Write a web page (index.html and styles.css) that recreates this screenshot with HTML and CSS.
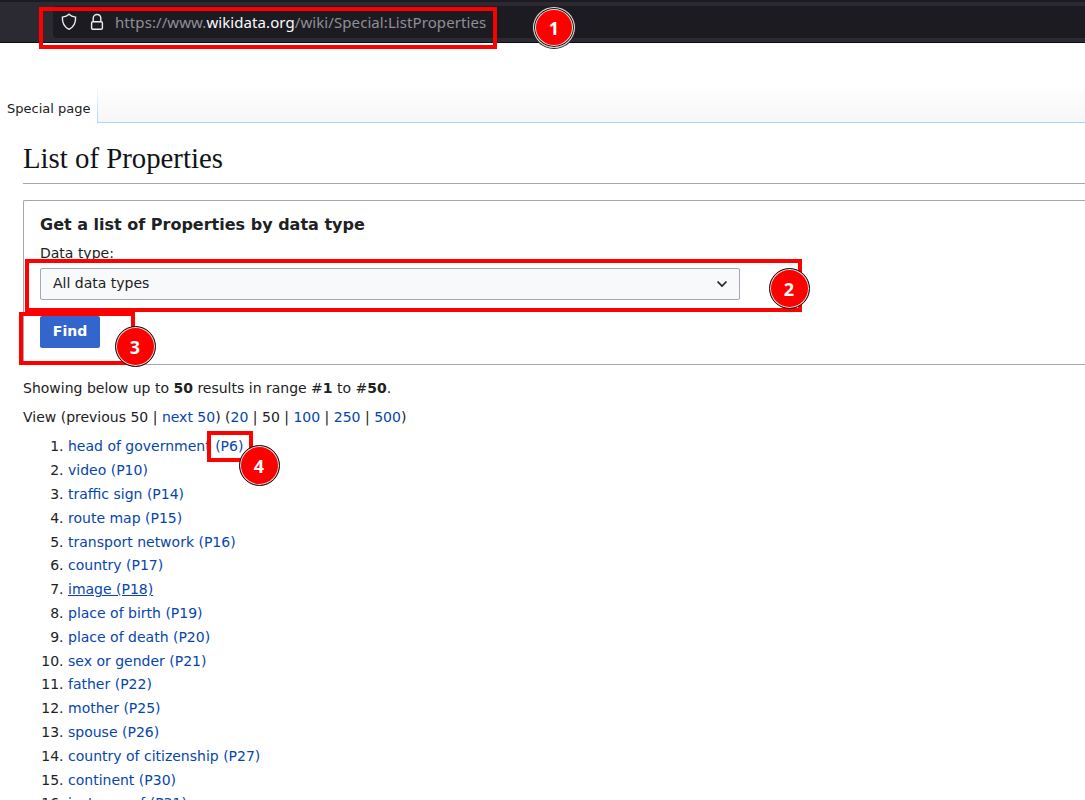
FILE: index.html
```html
<!DOCTYPE html>
<html lang="en">
<head>
<meta charset="utf-8">
<title>List of Properties</title>
<link rel="stylesheet" href="styles.css">
</head>
<body>
<header class="browser">
  <div class="address">
    <svg class="shield" width="16" height="18" viewBox="0 0 16 18"><path d="M8 1.200C9.400 2.600 11.500 3.600 14.600 4.100C14.900 9.300 12.700 13.900 8 16.300C3.300 13.900 1.100 9.300 1.400 4.100C4.500 3.600 6.600 2.600 8 1.200Z"/></svg>
    <svg class="lock" width="14" height="18" viewBox="0 0 14 18"><rect x="1.600" y="8.700" width="10.800" height="7.600" rx="1.300"/><path d="M3.200 8.700V5.500C3.200 .2 10.800 .2 10.800 5.500V8.700"/></svg>
    <span class="url">https://www.<span class="host">wikidata.org</span>/wiki/Special:ListProperties</span>
  </div>
</header>
<nav class="tabs"><div class="tab">Special page</div><div class="tabfill"></div></nav>
<main class="content">
  <h1 class="title">List of Properties</h1>
  <form class="panel">
    <h2 class="legend">Get a list of Properties by data type</h2>
    <label class="label">Data type:</label>
    <div class="select"><span>All data types</span><svg width="12" height="8" viewBox="0 0 12 8"><path d="M1.500 1.500L6 6L10.500 1.500"/></svg></div>
    <button class="find" type="button">Find</button>
  </form>
  <p class="line">Showing below up to <b>50</b> results in range #<b>1</b> to #<b>50</b>.</p>
  <p class="line">View (previous 50 | <a>next 50</a>) (<a>20</a> | 50 | <a>100</a> | <a>250</a> | <a>500</a>)</p>
  <ol class="list">
    <li><a>head of government (P6)</a></li>
    <li><a>video (P10)</a></li>
    <li><a>traffic sign (P14)</a></li>
    <li><a>route map (P15)</a></li>
    <li><a>transport network (P16)</a></li>
    <li><a>country (P17)</a></li>
    <li><a class="hovered">image (P18)</a></li>
    <li><a>place of birth (P19)</a></li>
    <li><a>place of death (P20)</a></li>
    <li><a>sex or gender (P21)</a></li>
    <li><a>father (P22)</a></li>
    <li><a>mother (P25)</a></li>
    <li><a>spouse (P26)</a></li>
    <li><a>country of citizenship (P27)</a></li>
    <li><a>continent (P30)</a></li>
    <li><a>instance of (P31)</a></li>
  </ol>
</main>
<div class="frame frame-url"></div>
<div class="frame frame-select"></div>
<div class="frame frame-find"></div>
<div class="frame frame-id"></div>
<div class="badge badge-1">1</div>
<div class="badge badge-2">2</div>
<div class="badge badge-3">3</div>
<div class="badge badge-4">4</div>
</body>
</html>
```
FILE: styles.css
```css
* { box-sizing: border-box; }
body {
  margin: 0;
  height: 800px;
  position: relative;
  overflow: hidden;
  background: #fff;
  color: #202122;
  font: 14px/22.4px "DejaVu Sans", sans-serif;
}
svg { fill: none; flex: none; }
.browser {
  height: 43px;
  padding: 4px 0 4px 53px;
  background: #2b2a33;
  border-top: 2px solid #1c1b22;
  border-bottom: 1px solid #0c0c0d;
}
.address {
  height: 32px;
  display: flex;
  align-items: center;
  padding-left: 8px;
  background: #1c1b22;
  border-radius: 4px 0 0 4px;
}
.shield, .lock { stroke: #ededf0; stroke-width: 1.4; }
.lock { margin-left: 13px; }
.url {
  margin-left: 11px;
  color: #8f8f96;
  font: 15px/20px "Noto Sans", sans-serif;
  letter-spacing: 0.08px;
  white-space: nowrap;
}
.host { color: #fbfbfe; }
.tabs { display: flex; height: 80px; padding-top: 43px; }
.tab { width: 97px; padding: 13px 0 0 7px; font-size: 13px; line-height: 20px; white-space: nowrap; }
.tabfill {
  flex: 1;
  border-left: 1px solid;
  border-bottom: 1px solid #a7d7f9;
  border-image: linear-gradient(#fff, #a7d7f9) 1;
  background: linear-gradient(#fff, #f6f6f6);
}
.content { padding-left: 23px; }
.title {
  margin: 0 0 16px;
  height: 61px;
  padding-top: 17px;
  border-bottom: 1px solid #a2a9b1;
  font: 28.8px/36px "Liberation Serif", serif;
  color: #101418;
}
.panel {
  height: 165px;
  padding: 12px 16px;
  border: 1px solid #a2a9b1;
  border-right: 0;
  border-radius: 2px 0 0 2px;
}
.legend { margin: 0; font-size: 16px; line-height: 23px; }
.label { display: block; margin-top: 6px; line-height: 22px; }
.select {
  width: 700px;
  height: 32px;
  margin-top: 4px;
  padding: 0 11px 2px 12px;
  display: flex;
  align-items: center;
  justify-content: space-between;
  background: #f8f9fa;
  border: 1px solid #a2a9b1;
  border-radius: 2px;
}
.select svg { stroke: #202122; stroke-width: 1.7; position: relative; top: 1px; }
.find {
  display: block;
  width: 60px;
  height: 32px;
  margin-top: 16px;
  padding: 0 0 2px;
  background: #36c;
  color: #fff;
  border: 0;
  border-radius: 2px;
  font: bold 14px "DejaVu Sans", sans-serif;
}
.line { margin: 7px 0 0; }
.panel + .line { margin-top: 12px; }
a { color: #0645ad; }
.hovered { text-decoration: underline; }
.list { margin: 6.6px 0 0; padding-left: 45px; }
.list li { margin-bottom: 1.4px; }
.frame { position: absolute; border: 4px solid #f00; }
.frame-url { left: 39px; top: 7px; width: 458px; height: 42px; }
.frame-select { left: 25px; top: 259px; width: 777px; height: 53px; }
.frame-find { left: 19px; top: 312px; width: 116px; height: 53px; }
.frame-id { left: 207px; top: 431px; width: 46px; height: 31px; }
.badge {
  position: absolute;
  width: 41px;
  height: 41px;
  padding-top: 1px;
  border-radius: 50%;
  background: #f00;
  border: 1px solid #111;
  box-shadow: inset 0 0 0 1px #ddd;
  color: #fff;
  font: bold 18px/38px "Open Sans", sans-serif;
  text-align: center;
}
.badge-1 {
  left: 533px;
  top: 7px;
  width: 42px;
  border-color: #ddd;
  box-shadow: 0 0 0 1px #222, inset 0 0 0 1px #111, inset 0 0 0 2px #ddd;
}
.badge-2 { left: 768.5px; top: 267.5px; }
.badge-3 { left: 114.5px; top: 325.5px; }
.badge-4 { left: 238.5px; top: 444.5px; }
```
